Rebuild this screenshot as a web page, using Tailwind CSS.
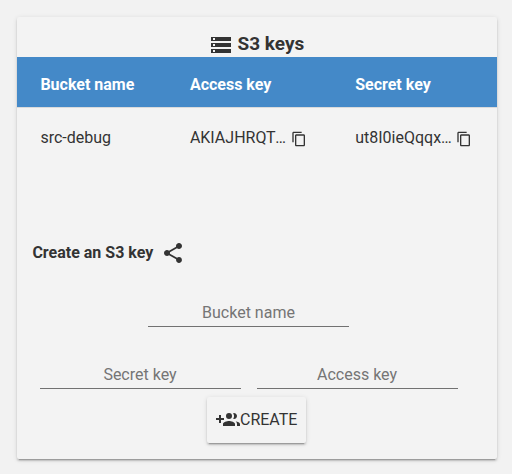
<!DOCTYPE html>
<html lang="en">
<head>
<meta charset="utf-8">
<title>S3 keys</title>
<script src="https://cdn.jsdelivr.net/npm/@tailwindcss/browser@4"></script>
</head>
<body class="bg-[#f2f2f2] p-[17px] pr-[15px] font-[Roboto,sans-serif] text-base leading-6 text-[#333]">
<svg class="hidden"><symbol id="copy" viewBox="0 0 24 24"><path d="M16 1H4c-1.100 0-2 .9-2 2v14h2V3h12V1zm3 4H8c-1.100 0-2 .9-2 2v14c0 1.100.9 2 2 2h11c1.100 0 2-.9 2-2V7c0-1.100-.9-2-2-2zm0 16H8V7h11v14z"/></symbol></svg>
<main class="flex h-[442px] w-[480px] flex-col rounded-[2px] bg-[#f3f3f3] shadow-[0_3px_1px_-2px_rgba(0,0,0,0.2),0_2px_2px_0_rgba(0,0,0,0.14),0_1px_5px_0_rgba(0,0,0,0.12)]">
  <h1 class="flex h-10 items-start gap-[4.500px] pl-48 pt-4 text-[19px] font-bold">
    <svg class="size-6 fill-current" viewBox="0 0 24 24"><path d="M2 20h20v-4H2v4zm2-3h2v2H4v-2zM2 4v4h20V4H2zm4 3H4V5h2v2zm-4 7h20v-4H2v4zm2-3h2v2H4v-2z"/></svg>
    <span class="-mt-px">S3 keys</span>
  </h1>
  <div class="grid h-[51px] grid-cols-[149.500px_165.300px_1fr] items-center border-b border-[#d9dadb] bg-[#4489c8] pl-[23.400px] pt-[5px] font-bold text-white">
    <span>Bucket name</span><span>Access key</span><span>Secret key</span>
  </div>
  <div class="grid h-[59px] grid-cols-[149.500px_165.300px_1fr] items-center pl-[23.400px]">
    <span>src-debug</span>
    <span class="flex items-center"><span class="w-[101px]">AKIAJHRQT<span class="-ml-[0.500px]">…</span></span><svg class="mt-[3px] size-4 fill-current" viewBox="0 0 24 24"><use href="#copy"/></svg></span>
    <span class="flex items-center"><span class="w-[101px]">ut8I0ieQqqx…</span><svg class="mt-[3px] size-4 fill-current" viewBox="0 0 24 24"><use href="#copy"/></svg></span>
  </div>
  <h2 class="mt-[73px] flex items-center gap-[7.500px] pl-[15.400px] font-bold">
    <span>Create an S3 key</span>
    <svg class="mt-px size-6 fill-current" viewBox="0 0 24 24"><path d="M18 16.080c-.76 0-1.440.3-1.960.77L8.910 12.700c.05-.23.09-.46.09-.7s-.04-.47-.09-.7l7.050-4.110c.54.5 1.250.81 2.040.81 1.660 0 3-1.340 3-3s-1.340-3-3-3-3 1.340-3 3c0 .24.04.47.09.7L8.040 9.810C7.500 9.310 6.790 9 6 9c-1.660 0-3 1.340-3 3s1.340 3 3 3c.79 0 1.500-.31 2.040-.81l7.120 4.160c-.05.21-.08.43-.08.65 0 1.610 1.310 2.920 2.920 2.920 1.610 0 2.920-1.310 2.920-2.920s-1.310-2.920-2.920-2.920z"/></svg>
  </h2>
  <form class="flex flex-col">
    <input class="ml-[131px] mt-[30px] h-8 w-[201px] border-b border-[#717171] pt-[3px] text-center outline-none placeholder:text-[#757575]" placeholder="Bucket name">
    <div class="mt-[30px] flex gap-4 pl-[23px]">
      <input class="h-8 w-[201px] border-b border-[#717171] pr-px pt-[3px] text-center outline-none placeholder:text-[#757575]" placeholder="Secret key">
      <input class="h-8 w-[201px] border-b border-[#717171] pr-px pt-[3px] text-center outline-none placeholder:text-[#757575]" placeholder="Access key">
    </div>
    <button type="button" class="ml-[190px] mt-2 flex h-[46px] w-[99px] items-center rounded-[2px] bg-[#f3f3f3] pl-[9px] shadow-[0_3px_1px_-2px_rgba(0,0,0,0.2),0_2px_2px_0_rgba(0,0,0,0.14),0_1px_5px_0_rgba(0,0,0,0.12)]">
      <svg class="size-6 shrink-0 fill-current" viewBox="0 0 24 24"><path d="M8 10H5V7H3v3H0v2h3v3h2v-3h3zM13 11a3 3 0 1 0 0-6 3 3 0 0 0 0 6zM18 11a3 3 0 1 0-.91-5.860 5 5 0 0 1 0 5.720c.28.09.59.14.91.14zM13 13c-2 0-6 1-6 3v2h12v-2c0-2-4-3-6-3zM19.620 13.160C20.450 13.890 21 14.820 21 16v2h3v-2c0-1.540-2.370-2.490-4.380-2.840z"/></svg><span>CREATE</span>
    </button>
  </form>
</main>
</body>
</html>
